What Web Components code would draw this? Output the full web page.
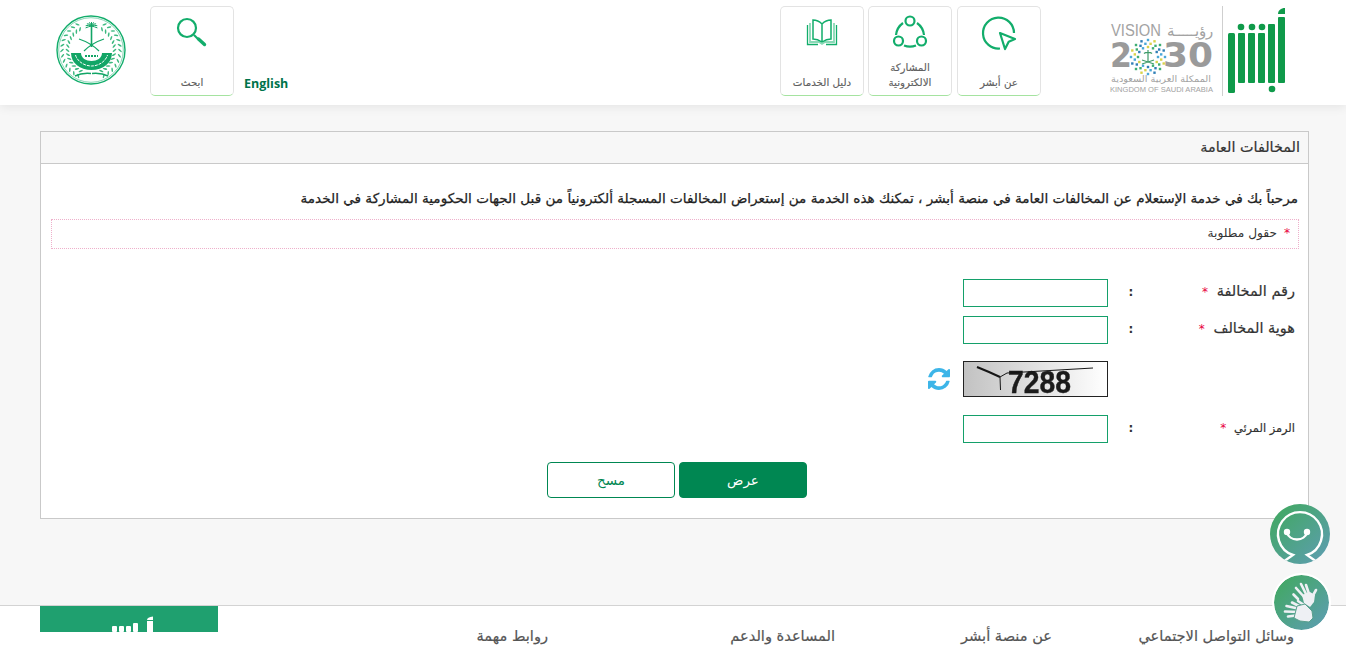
<!DOCTYPE html>
<html lang="ar" dir="rtl">
<head>
<meta charset="utf-8">
<style>
  html, body { margin: 0; height: 648px; overflow: hidden; }
  body { font-family: "DejaVu Sans", sans-serif; background: #f7f7f7; color: #333; }
</style>
</head>
<body>
<site-page>
  <site-header></site-header>
  <fine-panel title-text="المخالفات العامة">
    <p slot="intro">مرحباً بك في خدمة الإستعلام عن المخالفات العامة في منصة أبشر ، تمكنك هذه الخدمة من إستعراض المخالفات المسجلة ألكترونياً من قبل الجهات الحكومية المشاركة في الخدمة</p>
    <form-row label="رقم المخالفة"></form-row>
    <form-row label="هوية المخالف"></form-row>
    <captcha-row></captcha-row>
    <form-row label="الرمز المرئي" small></form-row>
    <form-actions></form-actions>
  </fine-panel>
  <site-footer></site-footer>
  <float-buttons></float-buttons>
</site-page>

<script>
const tileIcons = {
  about: `<g fill="none" stroke="#12ad6b" stroke-width="2.200" stroke-linejoin="round"><path d="M21 36.500A15.500 15.500 0 1 1 35 21"/><path d="M21 21 36 27 29.700 29.700 26 37Z"/></g>`,
  share: `<g fill="none" stroke="#12ad6b" stroke-width="2.200"><circle cx="20" cy="9" r="4.500"/><circle cx="8.500" cy="29" r="4.500"/><circle cx="31.500" cy="29" r="4.500"/><path d="M13 11A17 17 0 0 0 6 23"/><path d="M27 11A17 17 0 0 1 34 23"/><path d="M14 33.500A17 17 0 0 0 26 33.500"/></g>`,
  book: `<g fill="none"><path d="M8 11V30H17L20 32 23 30H32V11" stroke="#8ad9b6" stroke-width="1.800"/><path d="M5.500 13V32.500H16M34.500 13V32.500H24" stroke="#12ad6b" stroke-width="1.300"/><path d="M20 12C17 9 14 8 11 8V27C14 27 17 28 20 30C23 28 26 27 29 27V8C26 8 23 9 20 12V30" fill="#fff" stroke="#12ad6b" stroke-width="1.500"/></g>`,
  search: `<circle cx="15" cy="16" r="9" fill="none" stroke="#12ad6b" stroke-width="2.200"/><path d="M22 23 26 27" stroke="#12ad6b" stroke-width="2.200"/><path d="M26.500 27 32.500 32.500" stroke="#12ad6b" stroke-width="3.400" stroke-linecap="round"/>`
};

const starSquares = [[17, 16], [13.5, 16], [10, 12]].map(([r, n], k) => Array.from({length: n}, (_, i) => {
  const a = (i + k / 2) * 2 * Math.PI / n, c = ['#4aa8d8', '#d8d24a', '#3fae73', '#2f7fb5'][(i + k) % 4]
  return `<rect x="${(40 + r * Math.sin(a) - 1.200).toFixed(1)}" y="${(51 - r * Math.cos(a) - 1.200).toFixed(1)}" width="2.400" height="2.400" fill="${c}"/>`
}).join('')).join('');

// wreath leaves of the seal, both sides
const sealLeaves = [-1, 1].map(side => Array.from({length: 13}, (_, i) => {
  const deg = 28 + i * 10.500, a = deg * Math.PI / 180
  return [23.500, 29].map((r, k) => {
    const x = 36 + side * r * Math.sin(a), y = 36 - r * Math.cos(a)
    const rot = side * (deg + (k ? 40 : -40))
    return `<ellipse cx="${x.toFixed(1)}" cy="${y.toFixed(1)}" rx=".800" ry="2.300" transform="rotate(${rot.toFixed(0)} ${x.toFixed(1)} ${y.toFixed(1)})"/>`
  }).join('')
}).join('')).join('');

const palmFronds = Array.from({length: 9}, (_, i) => {
  const a = (-100 + i * 25) * Math.PI / 180
  return `<path d="M36.500 12Q${(36.5 + 3 * Math.sin(a)).toFixed(1)} ${(12 - 4 * Math.cos(a)).toFixed(1)} ${(36.5 + 6 * Math.sin(a)).toFixed(1)} ${(12 - 5 * Math.cos(a) + 1).toFixed(1)}"/>`
}).join('');

class SiteTile extends HTMLElement {
  connectedCallback() {
    this.attachShadow({mode: 'open'}).innerHTML = `
      <style>
      :host { display: block; width: 84px; height: 90px; box-sizing: border-box; border: 1px solid #e3e3e3; border-bottom-color: #a5e3a0; border-radius: 5px; background: #fff; }
      .wrap { height: 100%; display: flex; flex-direction: column; align-items: center; }
      svg { margin-top: 5px; flex: none; }
      .label { flex: 1; display: flex; align-items: flex-end; justify-content: center; text-align: center; padding-bottom: 6px; font: 10.300px/14.500px "DejaVu Sans", sans-serif; color: #5f5f5f; -webkit-text-stroke: .15px #5f5f5f; }
      </style>
      <div class="wrap">
        <svg width="40" height="40" viewBox="0 0 40 40">${tileIcons[this.getAttribute('icon')]}</svg>
        <div class="label"><slot></slot></div>
      </div>`
  }
}

class SiteHeader extends HTMLElement {
  connectedCallback() {
    this.attachShadow({mode: 'open'}).innerHTML = `
      <style>
      :host { display: flex; height: 105px; box-sizing: border-box; background: #fff; box-shadow: 0 2px 10px rgba(0,0,0,.08); position: relative; padding: 6px 59px 0 0; }
      .absher { width: 64px; height: 96px; flex: none; }
      .rule { width: 1px; height: 90px; background: #cfcfcf; margin-left: 6px; flex: none; }
      .vision { width: 108px; height: 90px; flex: none; }
      .tiles { display: flex; gap: 4px; margin-right: 67px; }
      .tiles site-tile:first-child { margin-left: 1px; }
      .spacer { flex: 1; }
      .en { align-self: flex-start; margin: 70px 0 0 10px; font: bold 12.500px/16px "Open Sans", sans-serif; color: #00734a; }
      .seal { width: 72px; height: 72px; margin: 8px 23px 0 55px; flex: none; }
      a { text-decoration: none; color: inherit; }
      </style>
      <svg class="absher" viewBox="0 0 64 96">
        <g fill="#0f9a4a">
          <rect x="5" y="27" width="7" height="60" rx="1.500"/>
          <rect x="15" y="27" width="7" height="50" rx="1"/>
          <rect x="25" y="27" width="7" height="50" rx="1"/>
          <rect x="35" y="27" width="7" height="50" rx="1"/>
          <rect x="45" y="18" width="7" height="59" rx="1"/>
          <rect x="55" y="11" width="7" height="66" rx="1"/>
          <path d="M55 8C55 4.500 58 2 62 2V8Z"/>
          <circle cx="18" cy="21" r="3.300"/><circle cx="29" cy="21" r="3.300"/><circle cx="39" cy="21" r="3.300"/><circle cx="49" cy="83" r="3.300"/>
        </g>
      </svg>
      <div class="rule"></div>
      <svg class="vision" viewBox="0 0 108 90">
        <g fill="#a3a3a3" font-family="'Liberation Sans', sans-serif">
          <text x="3" y="30" font-size="16" direction="ltr" text-anchor="start" textLength="50" lengthAdjust="spacingAndGlyphs">VISION</text>
          <text x="105" y="30" font-size="15" direction="rtl" text-anchor="start">رؤيـــــة</text>
          <g font-family="'DejaVu Sans', sans-serif" font-weight="bold" fill="#9a9a9a" font-size="33">
            <text x="2" y="61" direction="ltr" text-anchor="start" textLength="22" lengthAdjust="spacingAndGlyphs">2</text>
            <text x="55" y="61" direction="ltr" text-anchor="start" textLength="50" lengthAdjust="spacingAndGlyphs">30</text>
          </g>
          <text x="103" y="76" font-size="9" direction="rtl" text-anchor="start" font-family="'DejaVu Sans', sans-serif" textLength="100" lengthAdjust="spacingAndGlyphs">الممكلة العربية السعودية</text>
          <text x="2" y="86" font-size="7.500" direction="ltr" text-anchor="start" textLength="103" lengthAdjust="spacingAndGlyphs">KINGDOM OF SAUDI ARABIA</text>
        </g>
        <g>${starSquares}</g>
        <path d="M40 44V56M36 47.500C37.500 46 42.500 46 44 47.500M34 58 46 54M46 58 34 54" stroke="#3f9c6a" stroke-width="1.200" fill="none"/>
      </svg>
      <div class="tiles">
        <site-tile icon="about">عن أبشر</site-tile>
        <site-tile icon="share">المشاركة<br>الالكترونية</site-tile>
        <site-tile icon="book">دليل الخدمات</site-tile>
      </div>
      <div class="spacer"></div>
      <a class="en" href="#" lang="en" dir="ltr">English</a>
      <site-tile icon="search">ابحث</site-tile>
      <svg class="seal" viewBox="0 0 72 72">
        <circle cx="36" cy="36" r="34" fill="#fff" stroke="#12ad6b" stroke-width="1.400"/>
        <circle cx="36" cy="36" r="32.300" fill="none" stroke="#12ad6b" stroke-width=".500"/>
        <g fill="#3bb97f">${sealLeaves}</g>
        <g fill="none" stroke="#12a566" stroke-width="1">${palmFronds}</g>
        <path d="M36.500 12V33" stroke="#12a566" stroke-width="1.600"/>
        <g fill="none" stroke="#12a566" stroke-width="1.200">
          <path d="M24 25C30 27 38 31 44 37"/>
          <path d="M49 25C43 27 35 31 29 37"/>
        </g>
        <path fill="#12a566" d="M16 39H57C57 49 48 56 36.500 56S16 49 16 39Z"/>
        <path fill="#fff" d="M26 39H47C47 44 42 47 36.500 47S26 44 26 39Z"/>
        <path fill="none" stroke="#fff" stroke-width="1" stroke-dasharray="3 1" d="M20.500 41C22 47 29 52 36.500 52S51 47 52.500 41"/>
        <path d="M30 42H43" stroke="#12a566" stroke-width="2" stroke-dasharray="2 1"/>
        <path d="M20 62C26 59 31 59 36 59.500M53 62C47 59 42 59 37 59.500" stroke="#12a566" stroke-width="1.500" fill="none"/>
      </svg>`
  }
}

class FinePanel extends HTMLElement {
  connectedCallback() {
    this.attachShadow({mode: 'open'}).innerHTML = `
      <style>
      :host { display: block; margin: 26px 37px 0 40px; box-sizing: border-box; height: 388px; border: 1px solid #c9c9c9; background: #fff; }
      .title { height: 32px; box-sizing: border-box; background: #f7f7f7; border-bottom: 1px solid #c9c9c9; padding: 5px 8px 0 0; font: 14.400px/20px "DejaVu Sans", sans-serif; color: #333; -webkit-text-stroke: .2px #333; }
      .body { padding: 23px 9px 0 10px; }
      ::slotted(p) { margin: 0 1px 0 0; font: 13.580px/22px "DejaVu Sans", sans-serif; color: #222; white-space: nowrap; -webkit-text-stroke: .25px #222; }
      .req { box-sizing: border-box; height: 30px; margin-top: 10px; border: 1px dotted #eeb0cb; padding: 4px 8px 0 0; font: 12.200px/18px "DejaVu Sans", sans-serif; color: #333; }
      .req b { color: #e8003d; font-weight: normal; margin-left: 3px; }
      .rows { display: block; margin: 30px 4px 0 0; }
      </style>
      <div class="title">${this.getAttribute('title-text')}</div>
      <div class="body">
        <slot name="intro"></slot>
        <div class="req"><b>*</b> حقول مطلوبة</div>
        <div class="rows"><slot></slot></div>
      </div>`
  }
}

class FormRow extends HTMLElement {
  connectedCallback() {
    const small = this.hasAttribute('small')
    this.attachShadow({mode: 'open'}).innerHTML = `
      <style>
      :host { display: grid; grid-template-columns: 164px 23px 145px; height: 28px; margin-bottom: 9px; align-items: center; }
      .label { font: ${small ? 11.400 : 14.500}px/18px "DejaVu Sans", sans-serif; color: #333; -webkit-text-stroke: .2px #333; white-space: nowrap; padding-bottom: ${small ? 2 : 4}px; }
      .label b { color: #e8003d; font-weight: normal; margin-right: 4px; font-size: 12px; -webkit-text-stroke: 0; }
      .colon { font: bold 12px/18px "DejaVu Sans", sans-serif; color: #333; text-align: center; justify-self: end; width: 46px; padding-bottom: 2px; }
      input { box-sizing: border-box; width: 145px; height: 28px; margin: 0; padding: 0 6px; border: 1px solid #14a06a; background: #fff; outline: none; }
      </style>
      <div class="label">${this.getAttribute('label')} <b>*</b></div>
      <div class="colon">:</div>
      <input type="text">`
  }
}

class CaptchaRow extends HTMLElement {
  connectedCallback() {
    this.attachShadow({mode: 'open'}).innerHTML = `
      <style>
      :host { display: flex; height: 36px; margin: 17px 187px 18px 0; align-items: center; gap: 13px; }
      .img { width: 145px; height: 36px; box-sizing: border-box; border: 1px solid #222; background: linear-gradient(90deg, #c2c2c2, #fff); }
      .img svg { display: block; overflow: visible; }
      </style>
      <div class="img">
        <svg width="143" height="34" viewBox="0 0 143 34">
          <text x="44" y="31" font-family="'Liberation Sans', sans-serif" font-weight="bold" font-size="31" fill="#1b1b1b" stroke="#1b1b1b" stroke-width=".400" direction="ltr" textLength="63" lengthAdjust="spacingAndGlyphs" style="filter: blur(.4px)">7288</text>
          <path d="M13 5 25 10 36 15" fill="none" stroke="#161616" stroke-width="2"/>
          <path d="M36 15 36.500 28M36 15 43 11 129 6" fill="none" stroke="#161616" stroke-width="1"/>
        </svg>
      </div>
      <svg width="22" height="22" viewBox="0 0 1536 1536"><path fill="#3db5e8" d="M1511 928q0 5-1 7-64 268-268 434.500T764 1536q-146 0-282.500-55T238 1324l-129 129q-19 19-45 19t-45-19-19-45V960q0-26 19-45t45-19h448q26 0 45 19t19 45-19 45l-137 137q71 66 161 102t187 36q134 0 250-65t186-179q11-17 53-117 8-23 30-23h192q13 0 22.500 9.500t9.500 22.500zm25-800v448q0 26-19 45t-45 19h-448q-26 0-45-19t-19-45 19-45l138-138Q969 256 768 256q-134 0-250 65T332 500q-11 17-53 117-8 23-30 23H50q-13 0-22.500-9.500T18 608v-7q65-268 270-434.500T768 0q146 0 284 55.500T1297 212l130-129q19-19 45-19t45 19 19 45z"/></svg>`
  }
}

class FormActions extends HTMLElement {
  connectedCallback() {
    this.attachShadow({mode: 'open'}).innerHTML = `
      <style>
      :host { display: flex; justify-content: center; gap: 4px; margin: 19px 0 0 0; padding-left: 8px; }
      button { width: 128px; height: 36px; box-sizing: border-box; border: 1px solid #008752; border-radius: 4px; font: 13.500px "DejaVu Sans", sans-serif; cursor: pointer; }
      .go { background: #008752; color: #fff; }
      .clear { background: #fff; color: #008752; }
      </style>
      <button class="go">عرض</button>
      <button class="clear">مسح</button>`
  }
}

class SiteFooter extends HTMLElement {
  connectedCallback() {
    this.attachShadow({mode: 'open'}).innerHTML = `
      <style>
      :host { display: grid; grid-template-columns: 242px 217px 287px 1fr; margin-top: 86px; height: 60px; box-sizing: border-box; background: #fff; border-top: 1px solid #d3d3d3; padding: 0 52px 0 40px; position: relative; }
      h4 { margin: 19px 0 0; font: 14.600px/22px "DejaVu Sans", sans-serif; color: #555; white-space: nowrap; -webkit-text-stroke: .2px #555; }
      .last { display: flex; justify-content: space-between; }
      .brand { width: 178px; height: 26px; background: #1fa06f; overflow: hidden; }
      .brand svg { display: block; margin: 0 auto; }
      </style>
      <h4>وسائل التواصل الاجتماعي</h4>
      <h4>عن منصة أبشر</h4>
      <h4>المساعدة والدعم</h4>
      <div class="last">
        <h4>روابط مهمة</h4>
        <div class="brand">
          <svg width="60" height="26" viewBox="0 0 60 26">
            <g fill="#fff"><rect x="13" y="20" width="5" height="6" rx="1"/><rect x="20" y="20" width="5" height="6" rx="1"/><rect x="27" y="20" width="5" height="6" rx="1"/><rect x="34" y="17" width="5" height="9" rx="1"/><rect x="48" y="15" width="6" height="11"/><path d="M48 14C48 12 50 11 54 10.500V14Z"/></g>
          </svg>
        </div>
      </div>`
  }
}

class FloatButtons extends HTMLElement {
  connectedCallback() {
    this.attachShadow({mode: 'open'}).innerHTML = `
      <style>
      :host { display: block; }
      .chat, .sign { position: absolute; border-radius: 50%; background: linear-gradient(135deg, #3fa95c, #5f9db5); background-clip: padding-box; }
      .chat { left: 1270px; top: 504px; width: 60px; height: 60px; overflow: hidden; }
      .sign { left: 1272px; top: 573px; width: 59px; height: 59px; border: 2px solid #fff; box-sizing: border-box; }
      svg { display: block; }
      </style>
      <div class="chat">
        <svg width="60" height="60" viewBox="0 0 60 60">
          <path d="M13 58 23 51A22 22 0 1 1 37 51L47 58" fill="none" stroke="#fff" stroke-width="2.400"/>
          <circle cx="17" cy="28" r="3.200" fill="#fff"/><circle cx="37" cy="28" r="3.200" fill="#fff"/>
          <path d="M17 28C19 38 35 38 37 28" fill="none" stroke="#fff" stroke-width="2.400"/>
        </svg>
      </div>
      <div class="sign">
        <svg width="55" height="55" viewBox="0 0 55 55">
          <g stroke="#eef0f4" stroke-linecap="round" fill="none">
            <g stroke-width="2.600">
              <path d="M32 24 22 13"/><path d="M34 23 27 9"/><path d="M36 22 32 10"/><path d="M37 24 42 15"/><path d="M24 24 19.500 19.500"/>
            </g>
            <g stroke-width="2.600">
              <path d="M26 34 12.500 31"/><path d="M26 37 11 36.500"/><path d="M26 40 14 41.500"/><path d="M27 32 18 27.500"/><path d="M30 30 24 26"/>
            </g>
          </g>
          <path fill="#eef0f4" d="M28 20 36 17 41 20 40 27 36 32 30 28Z"/>
          <path fill="#eef0f4" stroke="#5a9f8d" stroke-width="1" d="M23 31 31 29 38 36 39 43 35 47 26 46 20 43Z"/>
        </svg>
      </div>`
  }
}

class SitePage extends HTMLElement {
  connectedCallback() {
    this.attachShadow({mode: 'open'}).innerHTML = `
      <style>:host { display: block; position: relative; height: 648px; overflow: hidden; }</style>
      <slot></slot>`
  }
}

customElements.define('site-tile', SiteTile);
customElements.define('site-header', SiteHeader);
customElements.define('fine-panel', FinePanel);
customElements.define('form-row', FormRow);
customElements.define('captcha-row', CaptchaRow);
customElements.define('form-actions', FormActions);
customElements.define('site-footer', SiteFooter);
customElements.define('float-buttons', FloatButtons);
customElements.define('site-page', SitePage);
</script>
</body>
</html>
